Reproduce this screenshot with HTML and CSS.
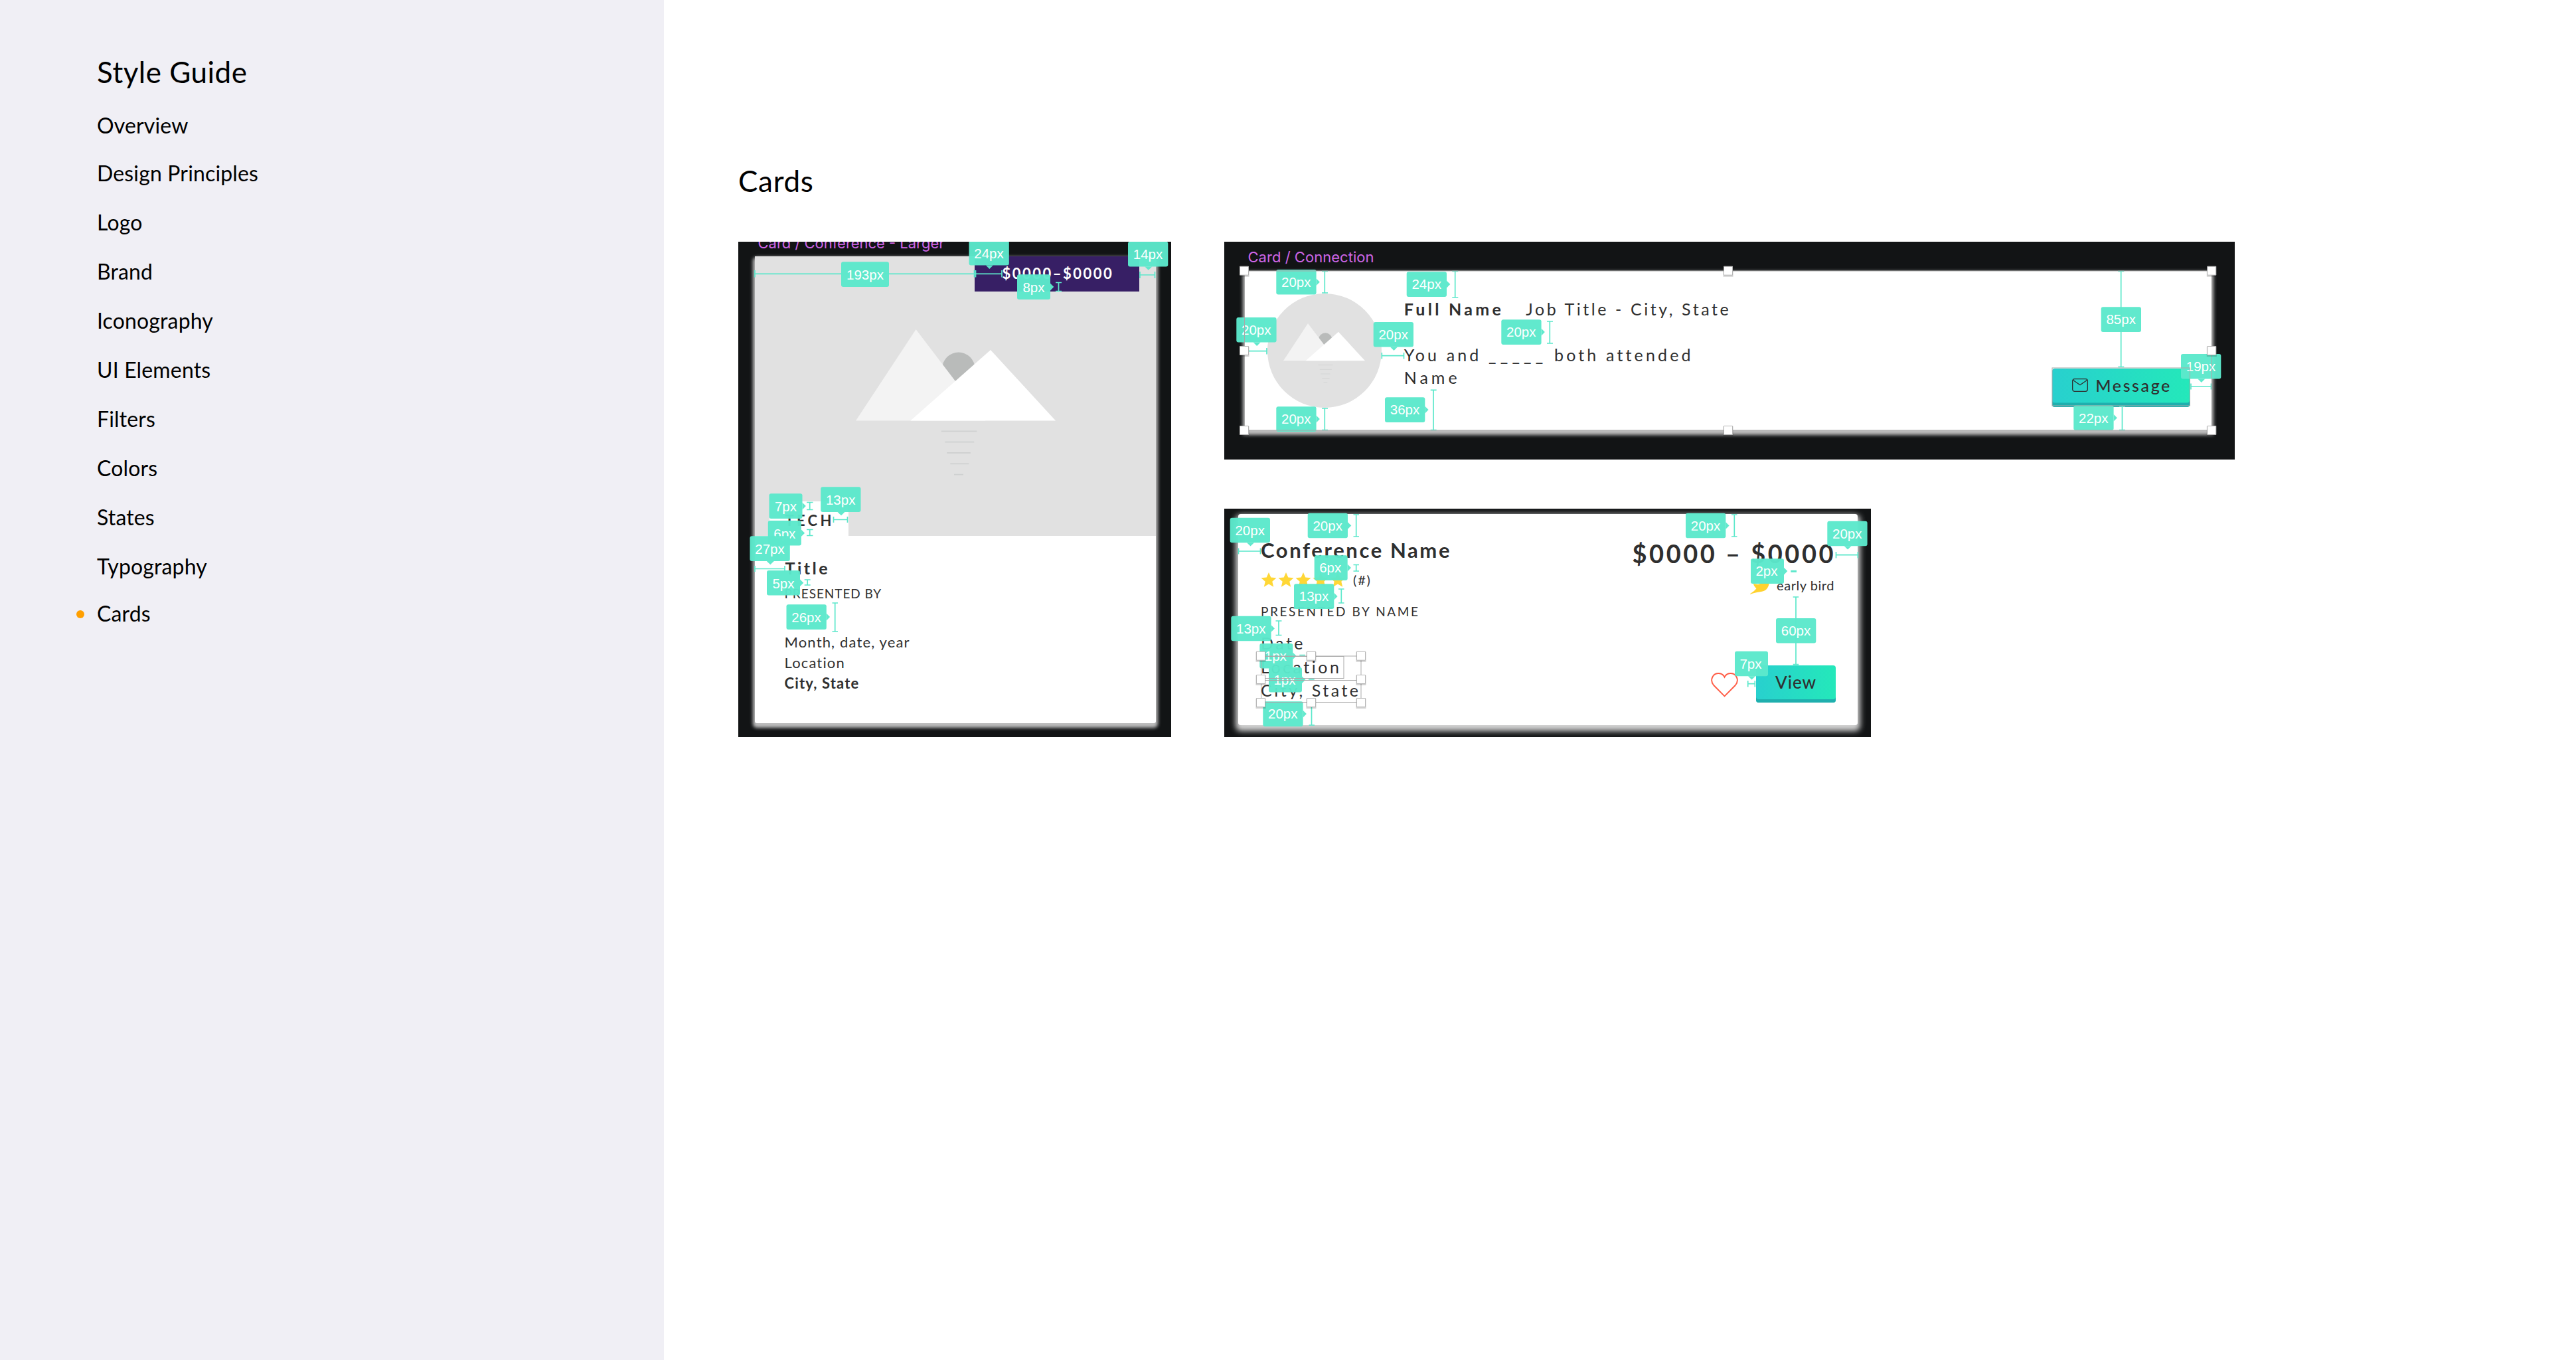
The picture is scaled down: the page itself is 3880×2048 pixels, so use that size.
FILE: index.html
```
<!DOCTYPE html>
<html lang="en">
<head>
    <meta charset="UTF-8">
    <meta name="viewport" content="width=device-width, initial-scale=1.0">
    <title>Style Guide - Cards</title>
    <link rel="stylesheet" href="styles.css">
</head>
<body>
    <!-- Shared shapes -->
    <svg class="defs" aria-hidden="true">
        <symbol id="mountains" viewBox="0 0 301 220">
            <circle cx="154.8" cy="59.3" r="24.7" fill="#b9bbba"/>
            <path d="M0 137.6 90.6 0 195.3 137.6z" fill="#f3f3f3"/>
            <path d="M82.4 137.6 203 31 301 137.6z" fill="#fff"/>
            <path d="M128.8 153.3h53.6M134.3 169.6h44M137.3 186h35.5M142.3 202.3h28M148 218.6h14" stroke="#cfd1d1" stroke-width="1.8"/>
        </symbol>
        <symbol id="star" viewBox="0 0 24 24">
            <path d="M12 1l3.3 7.6 8.2.7-6.2 5.4 1.9 8.1-7.2-4.3-7.2 4.3 1.9-8.1L.5 9.3l8.2-.7z" fill="#ffd736"/>
        </symbol>
        <g id="handle">
            <path d="M-7.5-6H7.5V9H-7.5z" fill="#000" opacity=".18"/>
            <path d="M-6.5-6.5h13v13h-13z" fill="#fff" stroke="#b5b5b5" stroke-width="1"/>
        </g>
        <!-- tag3/4/5 = number of characters, r/d = pointer right/down -->
        <g id="tag3r"><rect width="50" height="37.6" rx="3"/><path d="M50 13.5l5.3 5.3-5.3 5.3z"/></g>
        <g id="tag3d"><rect width="50" height="37.6" rx="3"/><path d="M20 37.6l5.5 5.3 5.5-5.3z"/></g>
        <g id="tag4"><rect width="60.3" height="37.6" rx="3"/></g>
        <g id="tag4r"><rect width="60.3" height="37.6" rx="3"/><path d="M60.3 13.5l5.3 5.3-5.3 5.3z"/></g>
        <g id="tag4d"><rect width="60.3" height="37.6" rx="3"/><path d="M25.3 37.6l5.5 5.3 5.5-5.3z"/></g>
        <g id="tag5"><rect width="72" height="37.6" rx="3"/></g>
    </svg>

    <aside class="sidebar">
        <h2>Style Guide</h2>
        <ul>
            <li class="tight">Overview</li>
            <li>Design Principles</li>
            <li>Logo</li>
            <li>Brand</li>
            <li>Iconography</li>
            <li>UI Elements</li>
            <li>Filters</li>
            <li>Colors</li>
            <li>States</li>
            <li class="tight">Typography</li>
            <li class="active">Cards</li>
        </ul>
    </aside>

    <main>
        <h1>Cards</h1>
        <div class="boards">

            <!-- Card / Conference - Larger -->
            <section class="board board-large">
                <div class="card large-card">
                    <div class="large-image">
                        <div class="price-badge">$0000–$0000</div>
                        <svg class="large-mountains"><use href="#mountains"/></svg>
                        <div class="category">TECH</div>
                    </div>
                    <div class="large-body">
                        <h3>Title</h3>
                        <p class="presented">PRESENTED BY</p>
                        <p>Month, date, year</p>
                        <p>Location</p>
                        <p><b>City, State</b></p>
                    </div>
                </div>
                <svg class="specs" viewBox="1112 364 652 746">
                    <text class="board-name" x="1141.5" y="373.5" textLength="281">Card / Conference - Larger</text>
                    <g class="rules">
                        <path d="M1137 412.3H1509M1137 407v10.5M1467.5 407v10.5M1469.5 407v10.5M1509 407v10.5"/>
                        <path d="M1717 414h22.5M1717 409v10M1739.5 409v10"/>
                        <path d="M1594.5 425.5v13M1590 425.5h9M1590 438.5h9"/>
                        <path d="M1219.7 756.5v11M1215 756.5h9.5M1215 767.5h9.5"/>
                        <path d="M1255.5 782.5h21M1255.5 778v9M1276.5 778v9"/>
                        <path d="M1219.7 797.5v9M1215 797.5h9.5M1215 806.5h9.5"/>
                        <path d="M1137 856.5h45M1137 852v9M1182 852v9"/>
                        <path d="M1216.2 873v8M1211.7 873h9M1211.7 881h9"/>
                        <path d="M1257.7 908v43M1253.5 908h8.5M1253.5 951h8.5"/>
                    </g>
                    <g class="tag" transform="translate(1267 394.3)"><use href="#tag5"/><text x="36" y="26.5">193px</text></g>
                    <g class="tag" transform="translate(1459.5 362)"><use href="#tag4d"/><text x="30" y="26.5">24px</text></g>
                    <g class="tag" transform="translate(1699 363.8)"><use href="#tag4d"/><text x="30" y="26.5">14px</text></g>
                    <g class="tag" transform="translate(1532 413.3)"><use href="#tag3r"/><text x="25" y="26.5">8px</text></g>
                    <g class="tag" transform="translate(1158.5 743.3)"><use href="#tag3r"/><text x="25" y="26.5">7px</text></g>
                    <g class="tag" transform="translate(1236.2 733.3)"><use href="#tag4d"/><text x="30" y="26.5">13px</text></g>
                    <g class="tag" transform="translate(1156.8 784)"><use href="#tag3r"/><text x="25" y="26.5">6px</text></g>
                    <g class="tag" transform="translate(1129.5 807.3)"><use href="#tag4d"/><text x="30" y="26.5">27px</text></g>
                    <g class="tag" transform="translate(1155 859)"><use href="#tag3r"/><text x="25" y="26.5">5px</text></g>
                    <g class="tag" transform="translate(1184.5 910.3)"><use href="#tag4r"/><text x="30" y="26.5">26px</text></g>
                </svg>
            </section>

            <!-- Card / Connection -->
            <section class="board board-connection">
                <div class="card connection-card">
                    <div class="avatar"><svg><use href="#mountains"/></svg></div>
                    <div class="connection-text">
                        <p class="who"><b>Full Name</b><span>Job Title - City, State</span></p>
                        <p class="shared">You and <span class="blank">_____</span> both attended<br><span class="second">Name</span></p>
                    </div>
                    <div class="btn btn-message">
                        <svg class="envelope" viewBox="0 0 24 20" fill="none" stroke="#2f2f2f" stroke-width="1.3">
                            <rect x=".7" y=".7" width="22.6" height="18.6" rx="3"/>
                            <path d="M1.2 2.2 12 9.8 22.8 2.2"/>
                        </svg>
                        Message
                    </div>
                </div>
                <svg class="specs" viewBox="1844 364 1522 328">
                    <text class="board-name" x="1879.5" y="395" textLength="190">Card / Connection</text>
                    <g class="rules">
                        <path d="M1995.3 408.5v33M1991 408.5h9M1991 441h9"/>
                        <path d="M1880 528.7h28.5M1908 524v9.5"/>
                        <path d="M2081.3 535.7h33.5M2081.3 531v9.5M2114.5 531v9.5"/>
                        <path d="M1995.3 615v32.5M1991 615h9M1991 647.5h9"/>
                        <path d="M2191.7 408.5v40M2187.3 408.5h9M2187.3 448h9"/>
                        <path d="M2334.3 484v33M2330 484h9M2330 517h9"/>
                        <path d="M2159 587.3v60M2154.7 587.3h9M2154.7 647.5h9"/>
                        <path d="M3194.7 408.5v144M3190.3 408.5h9M3190.3 552.5h9"/>
                        <path d="M3300 582h30.5M3300 577.5v9M3330.5 577.5v9"/>
                        <path d="M3196.5 612v35.5M3192 612h9M3192 647.5h9"/>
                    </g>
                    <g class="tag" transform="translate(1922.3 406)"><use href="#tag4r"/><text x="30" y="26">20px</text></g>
                    <g class="tag" transform="translate(1862.3 478)"><use href="#tag4d"/><text x="30" y="26">20px</text></g>
                    <g class="tag" transform="translate(2068.7 485)"><use href="#tag4d"/><text x="30" y="26">20px</text></g>
                    <g class="tag" transform="translate(1922.3 612.3)"><use href="#tag4r"/><text x="30" y="26">20px</text></g>
                    <g class="tag" transform="translate(2118.7 409.3)"><use href="#tag4r"/><text x="30" y="26">24px</text></g>
                    <g class="tag" transform="translate(2261.3 481.3)"><use href="#tag4r"/><text x="30" y="26">20px</text></g>
                    <g class="tag" transform="translate(2086 598.3)"><use href="#tag4r"/><text x="30" y="26">36px</text></g>
                    <g class="tag" transform="translate(3164.7 462.3)"><use href="#tag4"/><text x="30" y="26">85px</text></g>
                    <g class="tag" transform="translate(3285 533)"><use href="#tag4d"/><text x="30" y="26">19px</text></g>
                    <g class="tag" transform="translate(3123.3 610.5)"><use href="#tag4r"/><text x="30" y="26">22px</text></g>
                    <g class="outline">
                        <rect x="1874.5" y="408" width="1456.8" height="240"/>
                        <rect x="3091" y="554" width="207.5" height="57"/>
                    </g>
                    <g class="handles">
                        <use href="#handle" x="1874" y="407.7"/>
                        <use href="#handle" x="2603" y="407.7"/>
                        <use href="#handle" x="3331.3" y="407.7"/>
                        <use href="#handle" x="1874" y="528"/>
                        <use href="#handle" x="3331.3" y="528"/>
                        <use href="#handle" x="1874" y="648"/>
                        <use href="#handle" x="2603" y="648"/>
                        <use href="#handle" x="3331.3" y="648"/>
                    </g>
                </svg>
            </section>

            <!-- Card / Conference -->
            <section class="board board-conference">
                <div class="card conference-card">
                    <div class="conference-info">
                        <h3>Conference Name</h3>
                        <div class="rating">
                            <svg><use href="#star"/></svg>
                            <svg><use href="#star"/></svg>
                            <svg><use href="#star"/></svg>
                            <svg><use href="#star"/></svg>
                            <svg><use href="#star"/></svg>
                            <span>(#)</span>
                        </div>
                        <p class="presented">PRESENTED BY NAME</p>
                        <p>Date</p>
                        <p>Location</p>
                        <p>City, State</p>
                    </div>
                    <div class="conference-side">
                        <div class="price">$0000 – $0000</div>
                        <div class="early-bird">
                            <svg viewBox="0 0 29 28"><path d="M0 25.2C4 22.5 7 21 9.500 17 7.500 15.500 5.500 13 5 10L12 11 22 8 29 9C28 13 27 16 24.500 18.500 20 23 12 21.500 0 26z" fill="#ffd22e"/></svg>
                            early bird
                        </div>
                        <div class="actions">
                            <svg class="heart" viewBox="0 0 41 37" fill="none" stroke="#ff5c45" stroke-width="1.9">
                                <path d="M20.500 35.300 4.300 19C-2.500 11 3 1 11.300 1c4.200 0 7.500 2.200 9.200 5.600C22.200 3.200 25.500 1 29.700 1 38 1 43.500 11 36.700 19z"/>
                            </svg>
                            <div class="btn btn-view">View</div>
                        </div>
                    </div>
                </div>
                <svg class="specs" viewBox="1844 766 974 344">
                    <g class="rules">
                        <path d="M1865.5 830h33M1865.5 825.5v9M1898.5 825.5v9"/>
                        <path d="M2042.7 775v33M2038.5 775h8.5M2038.5 808h8.5"/>
                        <path d="M2042.7 850.5v9.5M2038.5 850.5h8.5M2038.5 860h8.5"/>
                        <path d="M2020.3 887v21M2016 887h8.5M2016 908h8.5"/>
                        <path d="M1926 935v21.5M1921.5 935h9M1921.5 956.5h9"/>
                        <path d="M1957.3 986.7h8.7M1971 1023h8.7"/>
                        <path d="M1975.5 1058v34M1971.5 1092h8.5"/>
                        <path d="M2612.3 775v33M2608 775h8.5M2608 808h8.5"/>
                        <path d="M2765.5 835.7h33M2765.5 831v9.5M2798.3 831v9.5"/>
                        <path d="M2697.3 860.3h8.7" class="thick"/>
                        <path d="M2705 899v102M2700.7 899h8.5M2700.7 1000.7h8.5"/>
                        <path d="M2632.7 1029.7h11M2632.7 1025v9.5M2643.3 1025v9.5"/>
                    </g>
                    <g class="tag" transform="translate(1852.7 779.7)"><use href="#tag4d"/><text x="30" y="26">20px</text></g>
                    <g class="tag" transform="translate(1969.7 772.7)"><use href="#tag4r"/><text x="30" y="26">20px</text></g>
                    <g class="tag" transform="translate(1979.7 836.3)"><use href="#tag3r"/><text x="24" y="26">6px</text></g>
                    <g class="tag" transform="translate(1949 879.3)"><use href="#tag4r"/><text x="30" y="26">13px</text></g>
                    <g class="tag" transform="translate(1854.3 927.7)"><use href="#tag4r"/><text x="30" y="26">13px</text></g>
                    <g class="tag" transform="translate(1897.3 969)"><use href="#tag3r"/><text x="24" y="26">1px</text></g>
                    <g class="tag" transform="translate(1911 1005)"><use href="#tag3r"/><text x="24" y="26">1px</text></g>
                    <g class="tag" transform="translate(1902.3 1056.3)"><use href="#tag4r"/><text x="30" y="26">20px</text></g>
                    <g class="tag" transform="translate(2539 772.7)"><use href="#tag4r"/><text x="30" y="26">20px</text></g>
                    <g class="tag" transform="translate(2752.3 784.7)"><use href="#tag4d"/><text x="30" y="26">20px</text></g>
                    <g class="tag" transform="translate(2637 841.3)"><use href="#tag3r"/><text x="24" y="26">2px</text></g>
                    <g class="tag" transform="translate(2675 931)"><use href="#tag4"/><text x="30" y="26">60px</text></g>
                    <g class="tag" transform="translate(2613 980.7)"><use href="#tag3d"/><text x="24" y="26">7px</text></g>
                    <g class="outline">
                        <rect x="1899.5" y="988" width="150.5" height="69.5"/>
                        <path d="M1899.5 1024.5H2050"/>
                        <rect x="1899.5" y="988.5" width="124.5" height="33"/>
                    </g>
                    <g class="handles">
                        <use href="#handle" x="1899" y="987.7"/>
                        <use href="#handle" x="1975" y="987.7"/>
                        <use href="#handle" x="2050" y="987.7"/>
                        <use href="#handle" x="1899" y="1023"/>
                        <use href="#handle" x="2050" y="1023"/>
                        <use href="#handle" x="1899" y="1058"/>
                        <use href="#handle" x="1975" y="1058"/>
                        <use href="#handle" x="2050" y="1058"/>
                    </g>
                </svg>
            </section>
        </div>
    </main>
</body>
</html>
```
FILE: styles.css
```
/* Global Styles */
* {
    box-sizing: border-box;
}

body {
    margin: 0;
    display: flex;
    min-height: 2048px;
    font-family: Lato, "Open Sans", sans-serif;
    color: #000;
    background-color: #fff;
}

h1, h2, h3, p, ul {
    margin: 0;
    padding: 0;
}

.defs {
    position: absolute;
    width: 0;
    height: 0;
}

/* Sidebar */
.sidebar {
    width: 1000px;
    padding: 82px 0 0 146px;
    background-color: #f0eff5;
}

.sidebar h2 {
    margin-bottom: 17px;
    font-size: 44px;
    font-weight: 400;
    line-height: 53px;
    letter-spacing: 0.5px;
}

.sidebar ul {
    list-style: none;
}

.sidebar li {
    position: relative;
    font-size: 32px;
    line-height: 74px;
    letter-spacing: 0.15px;
}

.sidebar .tight {
    margin-bottom: -2.5px;
}

.sidebar .active::before {
    content: "";
    position: absolute;
    left: -31px;
    top: 32px;
    width: 12px;
    height: 12px;
    border-radius: 50%;
    background-color: #ff9f00;
}

/* Main area */
main {
    padding: 246px 0 0 112px;
}

h1 {
    margin-bottom: 65px;
    font-size: 44px;
    font-weight: 400;
    line-height: 53px;
    letter-spacing: 0.7px;
}

.boards {
    display: grid;
    grid-template-columns: 652px 1522px;
    grid-template-rows: 328px 344px;
    gap: 74px 80px;
}

.board {
    position: relative;
    overflow: hidden;
    background-color: #121415;
    color: #2f2f2f;
}

.board-large {
    grid-row: span 2;
    padding: 22px 0 0 24.5px;
}

.board-connection {
    padding: 44px 0 0 30.7px;
}

.board-conference {
    width: 974px;
    padding: 8px 0 0 21px;
}

.card {
    background-color: #fff;
    border-radius: 3px;
    box-shadow: 0 4px 5px 3px #bdbdbd;
}

/* Conference - Larger */
.large-card {
    width: 604px;
    height: 703px;
}

.large-image {
    display: flex;
    flex-direction: column;
    height: 421px;
    background-color: #e1e1e1;
}

.price-badge {
    align-self: flex-end;
    width: 248px;
    height: 53px;
    margin-right: 25px;
    padding-left: 42px;
    background-color: #371f65;
    color: #fff;
    font-size: 22px;
    font-weight: 700;
    line-height: 51px;
    letter-spacing: 2.5px;
    white-space: nowrap;
}

.large-mountains {
    width: 301px;
    height: 220px;
    margin: 57px 0 0 152px;
}

.category {
    width: 119px;
    height: 52px;
    margin: auto 0 0 22px;
    padding-left: 24px;
    background-color: #fff;
    font-size: 22px;
    font-weight: 700;
    line-height: 57px;
    letter-spacing: 4.3px;
}

.large-body {
    padding: 33px 0 0 45px;
    font-size: 22px;
    line-height: 31px;
    letter-spacing: 1.15px;
}

.large-body h3 {
    padding-left: 1px;
    font-size: 25px;
    line-height: 30px;
    letter-spacing: 3.5px;
}

.large-body .presented {
    margin: 12px 0 46px;
    font-size: 19px;
    line-height: 23px;
    letter-spacing: 0.95px;
}

/* Connection */
.connection-card {
    display: flex;
    width: 1456.6px;
    height: 239.6px;
    padding: 34px 33px 35px 34px;
    border-radius: 0;
}

.avatar {
    width: 172px;
    height: 172px;
    padding: 45px 0 0 24.5px;
    border-radius: 50%;
    background-color: #e1e1e1;
}

.avatar svg {
    display: block;
    width: 123px;
    height: 90px;
}

.connection-text {
    padding: 6px 0 0 34px;
    font-size: 25px;
    line-height: 34px;
}

.who {
    display: flex;
    gap: 33px;
    margin-bottom: 35px;
    letter-spacing: 3.58px;
}

.who b {
    letter-spacing: 4.3px;
}

.shared {
    letter-spacing: 4.15px;
}

.blank {
    letter-spacing: 6.2px;
}

.second {
    letter-spacing: 5px;
}

.btn {
    display: flex;
    align-items: center;
    border-radius: 4px;
    background: linear-gradient(90deg, #28d0ce, #24e8ba);
    color: #2f2f2f;
    font-weight: 500;
}

.btn-message {
    align-self: flex-end;
    width: 207px;
    height: 58px;
    margin-left: auto;
    padding: 0 0 8px 30px;
    box-shadow: inset 0 -6.5px 0 #1fafae;
    font-size: 25px;
    letter-spacing: 2.6px;
}

.envelope {
    width: 24px;
    height: 20px;
    margin-right: 11px;
}

/* Conference */
.conference-card {
    display: flex;
    justify-content: space-between;
    width: 933px;
    height: 318px;
    padding: 35.5px 33px 34px 34px;
    border-radius: 4px;
    box-shadow: 0 5px 8px 4px #d3d3d3;
}

.conference-info {
    font-size: 25px;
    line-height: 35.5px;
    letter-spacing: 3.5px;
}

.conference-info h3 {
    font-size: 31px;
    line-height: 37px;
    letter-spacing: 2.6px;
}

.rating {
    display: flex;
    gap: 2px;
    margin-top: 14px;
    font-size: 20px;
    line-height: 24px;
    letter-spacing: 1.8px;
}

.rating svg {
    width: 24px;
    height: 24px;
}

.rating span {
    margin-left: 9px;
}

.conference-info .presented {
    margin: 24px 0 19.5px;
    font-size: 19px;
    line-height: 23px;
    letter-spacing: 2.6px;
}

.conference-side {
    display: flex;
    flex-direction: column;
    align-items: flex-end;
}

.price {
    font-size: 38px;
    font-weight: 700;
    line-height: 46px;
    letter-spacing: 3.5px;
}

.early-bird {
    display: flex;
    gap: 11px;
    margin: 13.5px 2px 0 0;
    font-size: 20px;
    line-height: 24px;
    letter-spacing: 0.54px;
}

.early-bird svg {
    width: 29px;
    height: 28px;
}

.actions {
    display: flex;
    align-items: flex-start;
    margin-top: auto;
}

.heart {
    width: 41px;
    height: 37px;
    margin: 11px 27px 0 0;
}

.btn-view {
    width: 120px;
    height: 56px;
    padding: 0 0 6px 29px;
    box-shadow: inset 0 -5px 0 #1fafae;
    font-size: 26px;
    letter-spacing: 0.95px;
}

/* Spec annotations drawn over each artboard */
.specs {
    position: absolute;
    left: 0;
    top: 0;
    width: 100%;
    height: 100%;
}

.board-name {
    fill: #cf66e8;
    font-family: Inter, Roboto, sans-serif;
    font-size: 22px;
}

.rules {
    fill: none;
    stroke: #5ce8cb;
    stroke-width: 1.7;
}

.rules .thick {
    stroke-width: 3;
}

.tag {
    fill: #5ce8cb;
    fill-opacity: 0.97;
}

.tag text {
    fill: #fff;
    fill-opacity: 1;
    font-family: "Liberation Sans", Arial, sans-serif;
    font-size: 20.5px;
    text-anchor: middle;
}

.outline {
    fill: none;
    stroke: #a9a9a9;
    stroke-width: 1;
}
```
